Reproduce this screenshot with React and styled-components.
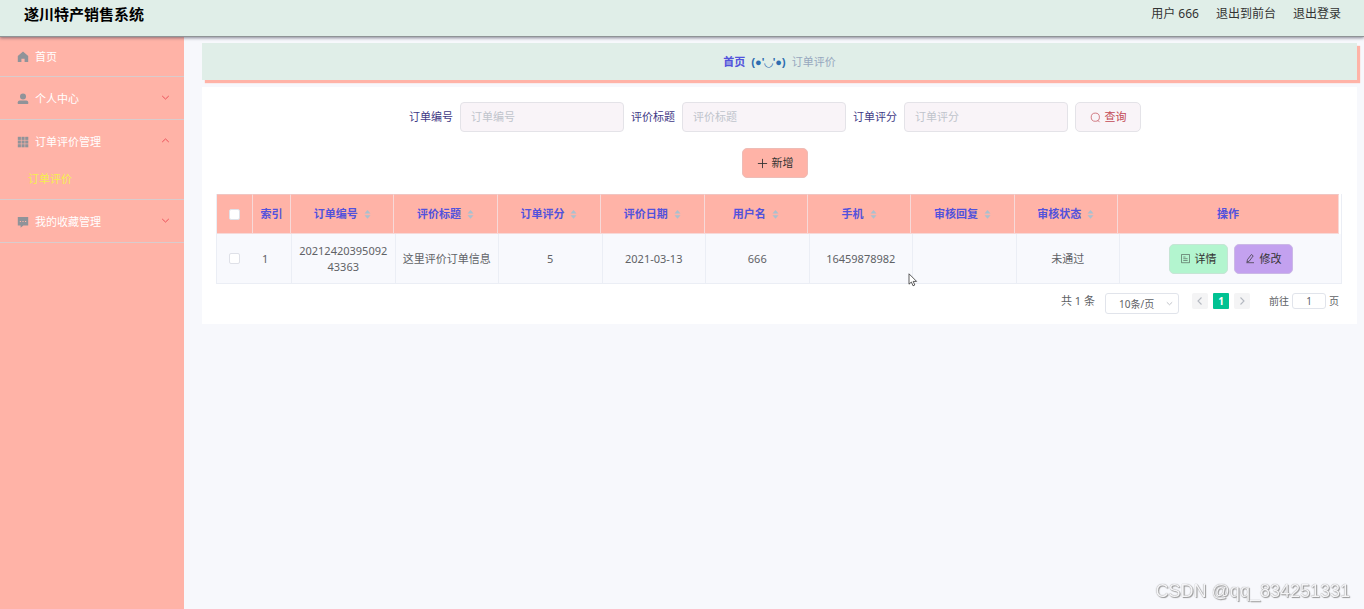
import React, { useState } from 'react';
import styled, { createGlobalStyle } from 'styled-components';

const GlobalStyle = createGlobalStyle`
  * {
    box-sizing: border-box;
  }

  body {
    margin: 0;
    background: #f7f8fc;
    color: #606266;
    font-family: 'Noto Sans', 'Noto Sans CJK SC', sans-serif;
    font-size: 11px;
    line-height: 16px;
  }

  button,
  input,
  select {
    margin: 0;
    font: inherit;
  }
`;

const Page = styled.div`
  display: flex;
  flex-direction: column;
  min-height: 100vh;
`;

// Top bar
const Header = styled.header`
  display: flex;
  justify-content: space-between;
  align-items: center;
  height: 37px;
  padding: 0 23px 9px 24px;
  background: #e0eee8;
  border-bottom: 1px solid #8f9496;
  box-shadow: 0 1px 3px rgba(60, 60, 80, 0.6);
  z-index: 1;
`;

const Title = styled.h1`
  margin: 0;
  color: #000;
  font-size: 15px;
  font-weight: 700;
  line-height: 20px;
`;

const UserArea = styled.nav`
  display: flex;
  gap: 17px;
  color: #333;
  font-size: 12px;
`;

const UserLink = styled.a`
  color: #333;
  text-decoration: none;
`;

const Body = styled.div`
  display: flex;
  flex: 1;
`;

// Sidebar
const Sidebar = styled.aside`
  flex: none;
  width: 184px;
  background: #ffb3a7;
`;

const MenuList = styled.ul`
  margin: 0;
  padding: 0;
  list-style: none;
`;

const MenuGroup = styled.li`
  border-bottom: 1px solid #d9cccd;
`;

const MenuItem = styled.button`
  display: flex;
  align-items: center;
  gap: 6px;
  width: 100%;
  height: ${(p) => (p.$compact ? '39px' : '42px')};
  padding: ${(p) => (p.$compact ? '0 13px 0 17px' : '2px 13px 0 17px')};
  border: 0;
  background: transparent;
  color: #fff;
  text-align: left;
  cursor: pointer;
`;

const MenuLabel = styled.span`
  flex: 1;
`;

const MenuArrow = styled.span`
  display: flex;
  padding-bottom: 4px;
`;

const SubMenuLink = styled.a`
  display: block;
  padding: 9px 28px 12px;
  color: #f5ef4e;
  text-decoration: none;
`;

// Content
const Main = styled.main`
  display: flex;
  flex: 1;
  flex-direction: column;
  gap: 7px;
  min-width: 0;
  padding: 6px 7px 0 18px;
`;

const Breadcrumb = styled.nav`
  display: flex;
  justify-content: center;
  align-items: center;
  gap: 6px;
  height: 37px;
  background: #e0eee8;
  box-shadow: 3px 3px 1px #ffb3a7;
  color: #97a8be;
`;

const CrumbLink = styled.a`
  color: #5252dc;
  font-weight: 700;
  text-decoration: none;
`;

const CrumbSeparator = styled.span`
  color: #2d6db0;
  font-family: 'Liberation Sans', 'DejaVu Sans', sans-serif;
  font-weight: 700;
`;

const Card = styled.section`
  padding: 15px 15px 10px 14px;
  background: #fff;
`;

const SearchForm = styled.form`
  display: flex;
  justify-content: center;
`;

const Field = styled.div`
  display: flex;
  align-items: center;
  margin-right: 7px;
`;

const FieldLabel = styled.label`
  width: 51px;
  color: #3f3a86;
`;

const FieldInput = styled.input`
  width: 164px;
  height: 30px;
  padding: 0 10px 2px;
  border: 1px solid #e4e3e8;
  border-radius: 4px;
  background: #f9f4f8;
  color: #606266;
  outline: none;

  &::placeholder {
    color: #c0c4cc;
  }
`;

const tones = {
  search: { background: '#f9f4f8', color: '#c24a55', border: '#e4e3e8' },
  add: { background: '#ffb3a7', color: '#333', border: '#eebcb6' },
  detail: { background: '#b3f5cf', color: '#333', border: '#c6e5d5' },
  edit: { background: '#c3a1ef', color: '#333', border: '#cbb8e6' },
};

const Button = styled.button`
  display: inline-flex;
  justify-content: center;
  align-items: center;
  gap: 4px;
  width: ${(p) => p.$width};
  height: 30px;
  margin-right: ${(p) => p.$spaced && '8px'};
  padding: 0;
  border: 1px solid ${(p) => tones[p.$tone].border};
  border-radius: 5px;
  background: ${(p) => tones[p.$tone].background};
  color: ${(p) => tones[p.$tone].color};
  cursor: pointer;
`;

const Toolbar = styled.div`
  display: flex;
  justify-content: center;
  margin: 16px 0;
`;

// Table, the head leaves a small gutter on the right
const TableBox = styled.div`
  border: solid #ebeef5;
  border-width: 0 1px;
`;

const HeadGutter = styled.div`
  padding-right: 2px;
`;

const Table = styled.table`
  width: 100%;
  border-collapse: separate;
  border-spacing: 0;
  table-layout: fixed;
`;

const HeadCell = styled.th`
  height: 40px;
  padding: 0;
  border-top: 1px solid #f0c5c2;
  border-right: 1px solid #f7d9d8;
  border-bottom: 1px solid #f7d9d8;
  background: #ffb3a7;
  color: #5252dc;
  font-weight: 700;
  text-align: center;
`;

const SortLabel = styled.span`
  display: inline-flex;
  align-items: center;
  gap: 6px;
`;

const Cell = styled.td`
  height: 50px;
  padding: ${(p) => (p.$align === 'left' ? '0 11px' : '0 7px')};
  border-right: ${(p) => !p.$plain && '1px solid #ebeef5'};
  border-bottom: 1px solid #ebeef5;
  background: #f8f9fd;
  text-align: ${(p) => p.$align || 'center'};
  word-break: break-all;
`;

const Checkbox = styled.input`
  display: block;
  width: 11px;
  height: 11px;
  margin: 0 auto;
  border: 1px solid #dfe1e8;
  border-radius: 2px;
  background: #fff;
  appearance: none;
  cursor: pointer;

  &:checked {
    background: #00c292;
  }
`;

const Actions = styled.div`
  display: flex;
  justify-content: center;
  gap: 6px;
`;

// Pagination
const Pagination = styled.div`
  display: flex;
  justify-content: flex-end;
  align-items: flex-start;
  margin-top: 9px;
  padding-right: 3px;
`;

const SelectBox = styled.div`
  display: grid;
  align-items: center;
  margin: 0 13px 0 10px;

  > * {
    grid-area: 1 / 1;
  }

  > svg {
    margin-right: 5px;
    justify-self: end;
    pointer-events: none;
  }
`;

const PageSize = styled.select`
  width: 74px;
  height: 21px;
  padding: 0 13px;
  border: 1px solid #e1e4eb;
  border-radius: 3px;
  background: #fff;
  color: #606266;
  font-size: 10px;
  appearance: none;
`;

const Pager = styled.div`
  display: flex;
  gap: 5px;
  margin-right: 19px;
`;

const PageButton = styled.button`
  display: flex;
  justify-content: center;
  align-items: center;
  width: 16px;
  height: 16px;
  padding: 0;
  border: 0;
  border-radius: ${(p) => (p.$active ? '1px' : '2px')};
  background: ${(p) => (p.$active ? '#00c292' : '#f4f4f5')};
  color: ${(p) => (p.$active ? '#fff' : '#b4b8c0')};
  font-size: 10px;
  font-weight: 700;
`;

const Jumper = styled.label`
  display: flex;
  gap: 3px;
  font-size: 10px;
`;

const JumpInput = styled.input`
  width: 34px;
  height: 16px;
  padding: 0;
  border: 1px solid #e1e4eb;
  border-radius: 3px;
  color: #606266;
  text-align: center;
`;

const Watermark = styled.div`
  position: fixed;
  right: 14px;
  bottom: 8px;
  color: #f4f4f6;
  font-family: 'Liberation Sans', sans-serif;
  font-size: 18px;
  line-height: 20px;
  text-shadow: 0 0 1px #777, 1px 1px 1px #999;
  pointer-events: none;
`;

const Pointer = styled.svg`
  position: fixed;
  top: 273px;
  left: 908px;
  pointer-events: none;
`;

// Icons
const Solid = ({ children }) => (
  <svg width="12" height="12" viewBox="0 0 12 12" fill="#909399" aria-hidden="true">
    {children}
  </svg>
);

const HomeIcon = () => (
  <Solid>
    <path d="M6 .6 11.2 5V11H7.6V7.8H4.4V11H.8V5Z" />
  </Solid>
);

const UserIcon = () => (
  <Solid>
    <circle cx="6" cy="3.4" r="3" />
    <path d="M.8 11V9.3Q.8 7.5 2.6 7.5H9.4Q11.2 7.5 11.2 9.3V11Z" />
  </Solid>
);

const GridIcon = () => (
  <Solid>
    {[0, 1, 2].map((row) =>
      [0, 1, 2].map((col) => (
        <rect key={`${row}${col}`} x={0.8 + col * 3.7} y={0.8 + row * 3.7} width="3.1" height="3.1" />
      ))
    )}
  </Solid>
);

const CommentIcon = () => (
  <Solid>
    <path
      fillRule="evenodd"
      d="M.8 1H11.2V9.4H6.4L3.6 11.8V9.4H.8ZM2.8 4.9V6H4V4.9ZM5.4 4.9V6H6.6V4.9ZM8 4.9V6H9.2V4.9Z"
    />
  </Solid>
);

const Line = ({ size = 11, color = 'currentColor', weight = 0.8, d }) => (
  <svg
    width={size}
    height={size}
    viewBox="0 0 10 10"
    fill="none"
    stroke={color}
    strokeWidth={weight}
    aria-hidden="true"
  >
    <path d={d} />
  </svg>
);

const ArrowDown = ({ color, size }) => <Line color={color} size={size} d="M2 3.6 5 6.4 8 3.6" />;
const ArrowUp = ({ color, size }) => <Line color={color} size={size} d="M2 6.4 5 3.6 8 6.4" />;
const ArrowLeft = () => <Line size={10} weight={1.1} d="M6.5 1.5 3 5 6.5 8.5" />;
const ArrowRight = () => <Line size={10} weight={1.1} d="M3.5 1.5 7 5 3.5 8.5" />;
const PlusIcon = () => <Line d="M5 .8V9.2M.8 5H9.2" />;

const SearchIcon = () => (
  <svg width="11" height="11" viewBox="0 0 11 11" fill="none" stroke="currentColor" strokeWidth=".7" aria-hidden="true">
    <circle cx="5.3" cy="5.2" r="4.1" />
    <path d="M7.8 8.3 9.6 10.2" />
  </svg>
);

const TicketIcon = () => (
  <svg width="11" height="11" viewBox="0 0 11 11" fill="none" stroke="currentColor" strokeWidth=".5" aria-hidden="true">
    <path d="M1.5 1.5H9.5V9.7H1.5ZM3.3 4H5.5M3.3 5.7H7.6M3.3 7.5H7.6" />
  </svg>
);

const EditIcon = () => (
  <svg width="11" height="11" viewBox="0 0 11 11" fill="none" stroke="currentColor" strokeWidth=".7" aria-hidden="true">
    <path d="M6.4 1.5 8.2 2.9 4.3 8.1 2 9 2.4 6.7ZM1.3 9.7H9" />
  </svg>
);

const SortIcon = () => (
  <svg width="7" height="9" viewBox="0 0 7 9" fill="#a9c0cf" aria-hidden="true">
    <path d="M3.5 0 6.5 3.5H.5ZM.5 5.2H6.5L3.5 8.7Z" />
  </svg>
);

const menus = [
  { name: '首页', Icon: HomeIcon, compact: true },
  { name: '个人中心', Icon: UserIcon, children: [] },
  { name: '订单评价管理', Icon: GridIcon, children: ['订单评价'] },
  { name: '我的收藏管理', Icon: CommentIcon, children: [] },
];

const fields = [
  { key: 'orderNo', label: '订单编号' },
  { key: 'title', label: '评价标题' },
  { key: 'score', label: '订单评分' },
];

const columns = ['订单编号', '评价标题', '订单评分', '评价日期', '用户名', '手机', '审核回复', '审核状态'];

const rows = [
  ['2021242039509243363', '这里评价订单信息', '5', '2021-03-13', '666', '16459878982', '', '未通过'],
];

const Col = styled.col`
  width: ${(p) => p.$width};
`;

const Columns = ({ check, index }) => (
  <colgroup>
    <Col $width={check} />
    <Col $width={index} />
    {columns.map((name) => (
      <col key={name} />
    ))}
    <Col $width="221px" />
  </colgroup>
);

const App = () => {
  const [opened, setOpened] = useState('订单评价管理');
  const [query, setQuery] = useState({ orderNo: '', title: '', score: '' });
  const [page, setPage] = useState('1');

  const handleChange = (e) => {
    const { name, value } = e.target;
    setQuery((prev) => ({ ...prev, [name]: value }));
  };

  return (
    <Page>
      <GlobalStyle />
      <Header>
        <Title>遂川特产销售系统</Title>
        <UserArea>
          <span>用户 666</span>
          <UserLink href="#front">退出到前台</UserLink>
          <UserLink href="#logout">退出登录</UserLink>
        </UserArea>
      </Header>

      <Body>
        <Sidebar>
          <MenuList>
            {menus.map(({ name, Icon, compact, children }) => (
              <MenuGroup key={name}>
                <MenuItem type="button" $compact={compact} onClick={() => setOpened(name)}>
                  <Icon />
                  <MenuLabel>{name}</MenuLabel>
                  {children && (
                    <MenuArrow>
                      {opened === name ? <ArrowUp color="#e8434f" /> : <ArrowDown color="#e8434f" />}
                    </MenuArrow>
                  )}
                </MenuItem>
                {opened === name &&
                  children?.map((child) => (
                    <SubMenuLink key={child} href="#comments">
                      {child}
                    </SubMenuLink>
                  ))}
              </MenuGroup>
            ))}
          </MenuList>
        </Sidebar>

        <Main>
          <Breadcrumb>
            <CrumbLink href="#home">首页</CrumbLink>
            <CrumbSeparator>(●'◡'●)</CrumbSeparator>
            <span>订单评价</span>
          </Breadcrumb>

          <Card>
            <SearchForm onSubmit={(e) => e.preventDefault()}>
              {fields.map(({ key, label }) => (
                <Field key={key}>
                  <FieldLabel htmlFor={key}>{label}</FieldLabel>
                  <FieldInput id={key} name={key} placeholder={label} value={query[key]} onChange={handleChange} />
                </Field>
              ))}
              <Button type="submit" $tone="search" $width="66px" $spaced>
                <SearchIcon />
                查询
              </Button>
            </SearchForm>

            <Toolbar>
              <Button type="button" $tone="add" $width="66px" $spaced>
                <PlusIcon />
                新增
              </Button>
            </Toolbar>

            <TableBox>
              <HeadGutter>
                <Table>
                  <Columns check="36px" index="38px" />
                  <thead>
                    <tr>
                      <HeadCell>
                        <Checkbox type="checkbox" aria-label="全选" />
                      </HeadCell>
                      <HeadCell>索引</HeadCell>
                      {columns.map((name) => (
                        <HeadCell key={name}>
                          <SortLabel>
                            {name}
                            <SortIcon />
                          </SortLabel>
                        </HeadCell>
                      ))}
                      <HeadCell>操作</HeadCell>
                    </tr>
                  </thead>
                </Table>
              </HeadGutter>
              <Table>
                <Columns check="34px" index="41px" />
                <tbody>
                  {rows.map((row, index) => (
                    <tr key={row[0]}>
                      <Cell $plain>
                        <Checkbox type="checkbox" aria-label={`选择 ${index + 1}`} />
                      </Cell>
                      <Cell $align="left">{index + 1}</Cell>
                      {row.map((value, i) => (
                        <Cell key={columns[i]}>{value}</Cell>
                      ))}
                      <Cell $plain>
                        <Actions>
                          <Button type="button" $tone="detail" $width="59px">
                            <TicketIcon />
                            详情
                          </Button>
                          <Button type="button" $tone="edit" $width="59px">
                            <EditIcon />
                            修改
                          </Button>
                        </Actions>
                      </Cell>
                    </tr>
                  ))}
                </tbody>
              </Table>
            </TableBox>

            <Pagination>
              <span>共 1 条</span>
              <SelectBox>
                <PageSize aria-label="每页条数" defaultValue="10">
                  <option value="10">10条/页</option>
                  <option value="20">20条/页</option>
                </PageSize>
                <ArrowDown size={9} color="#a8acb4" />
              </SelectBox>
              <Pager>
                <PageButton type="button" aria-label="上一页" disabled>
                  <ArrowLeft />
                </PageButton>
                <PageButton type="button" $active>
                  1
                </PageButton>
                <PageButton type="button" aria-label="下一页" disabled>
                  <ArrowRight />
                </PageButton>
              </Pager>
              <Jumper>
                前往
                <JumpInput value={page} onChange={(e) => setPage(e.target.value)} />
                页
              </Jumper>
            </Pagination>
          </Card>
        </Main>
      </Body>

      <Pointer width="10" height="14" viewBox="0 0 10 14" fill="#fff" stroke="#333" strokeWidth=".8" aria-hidden="true">
        <path d="M1 .8V11.2L3.4 9 5 12.8 6.8 12 5.2 8.4H8.6Z" />
      </Pointer>
      <Watermark>CSDN @qq_834251331</Watermark>
    </Page>
  );
};

export default App;
